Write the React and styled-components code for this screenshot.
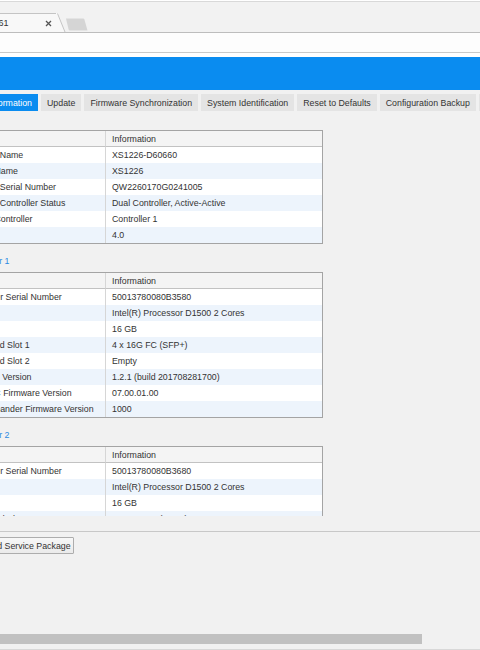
import styled, { createGlobalStyle } from 'styled-components';

const GlobalStyle = createGlobalStyle`
  html, body {
    margin: 0;
    padding: 0;
    background: #f1f1f1;
    overflow: hidden;
  }
  body {
    font-family: "Liberation Sans", Arial, sans-serif;
  }
`;

const TABS = [
  'Information',
  'Update',
  'Firmware Synchronization',
  'System Identification',
  'Reset to Defaults',
  'Configuration Backup',
  'Volume Restoration',
];

const SYSTEM_ROWS = [
  ['System Name', 'XS1226-D60660'],
  ['Model Name', 'XS1226'],
  ['System Serial Number', 'QW2260170G0241005'],
  ['Current Controller Status', 'Dual Controller, Active-Active'],
  ['Active Controller', 'Controller 1'],
  ['Version', '4.0'],
];

const controllerRows = (serial) => [
  ['Controller Serial Number', serial],
  ['CPU', 'Intel(R) Processor D1500 2 Cores'],
  ['Memory', '16 GB'],
  ['Host Card Slot 1', '4 x 16G FC (SFP+)'],
  ['Host Card Slot 2', 'Empty'],
  ['Software Version', '1.2.1 (build 201708281700)'],
  ['SAS IOC Firmware Version', '07.00.01.00'],
  ['SAS Expander Firmware Version', '1000'],
];

function InfoTable({ rows, inset = 3 }) {
  return (
    <Table>
      <HeadCell $inset={inset} />
      <HeadCell $value>Information</HeadCell>
      {rows.map(([label, value], i) => (
        <Row key={label} $striped={i % 2 === 1}>
          <Cell $inset={inset}>{label}</Cell>
          <Cell $value>{value}</Cell>
        </Row>
      ))}
    </Table>
  );
}

function App() {
  return (
    <Window>
      <GlobalStyle />
      <TabStrip>
        <BrowserTab>
          <TabTitle>XS1226-D60661</TabTitle>
          <svg width='7' height='7' viewBox='0 0 7 7'>
            <path d='M1 1 L6 6 M6 1 L1 6' stroke='#555' strokeWidth='1.3' />
          </svg>
        </BrowserTab>
        <TabEdge width='10' height='20' viewBox='0 0 10 20'>
          <path d='M0 0 L2 0 L9 19 L0 19 Z' fill='#f8f8f8' />
          <path d='M1.5 0.5 L9 19' stroke='#c4c4c4' strokeWidth='1' fill='none' />
        </TabEdge>
        <NewTab width='26' height='13' viewBox='0 0 26 13'>
          <path d='M3 0.5 L20 0.5 Q21 0.5 21.4 1.6 L24.5 12.5 L7 12.5 Q6 12.5 5.6 11.4 Z' fill='#d5d5d5' />
        </NewTab>
      </TabStrip>
      <Toolbar />
      <PageTop />
      <Banner />
      <Body>
        <TabList>
          {TABS.map((t, i) => (
            <Tab key={t} $active={i === 0}>{t}</Tab>
          ))}
        </TabList>
        <Panel>
          <InfoTable rows={SYSTEM_ROWS} />
          <SectionTitle>Controller 1</SectionTitle>
          <InfoTable rows={controllerRows('50013780080B3580')} inset={0} />
          <SectionTitle>Controller 2</SectionTitle>
          <InfoTable rows={controllerRows('50013780080B3680')} inset={0} />
        </Panel>
        <Footer>
          <Button type='button'>Download Service Package</Button>
        </Footer>
      </Body>
      <ScrollTrack>
        <ScrollThumb style={{ width: 422 }} />
      </ScrollTrack>
      <BottomEdge />
    </Window>
  );
}

const Window = styled.div`
  width: 480px;
  height: 650px;
  overflow: hidden;
  display: flex;
  flex-direction: column;
  background: #fff;
  padding-top: 1px;
  box-sizing: border-box;
`;

const TabStrip = styled.div`
  height: 32px;
  box-sizing: border-box;
  padding-top: 11px;
  background: #f2f2f2;
  border-top: 1px solid #d9d9d9;
  border-bottom: 1px solid #bdbdbd;
  display: flex;
  align-items: flex-start;
  margin-left: -66px;
  flex: none;
`;

const BrowserTab = styled.div`
  width: 123px;
  height: 19px;
  box-sizing: border-box;
  padding: 0 5px 0 8px;
  background: #f8f8f8;
  border-top: 1px solid #c4c4c4;
  display: flex;
  align-items: center;
  justify-content: space-between;
  font-size: 9px;
  color: #333;
`;

const TabTitle = styled.span`
  white-space: nowrap;
`;

const TabEdge = styled.svg`
  display: block;
  margin-left: -1px;
`;

const NewTab = styled.svg`
  display: block;
  margin: 5px 0 0 -3px;
`;

const Toolbar = styled.div`
  height: 19px;
  flex: none;
  background: #fdfdfd;
  border-bottom: 1px solid #c9c9c9;
`;

const PageTop = styled.div`
  height: 4px;
  flex: none;
  background: #fff;
`;

const Banner = styled.div`
  height: 33px;
  flex: none;
  background: #0a8cf0;
`;

const Body = styled.div`
  flex: 1;
  min-height: 0;
  margin-left: -40px;
  padding-top: 4px;
  background: #f1f1f1;
  font-size: 8.8px;
  color: #333;
`;

const TabList = styled.div`
  display: flex;
  gap: 3px;
  height: 17px;
  padding-left: 22px;
  white-space: nowrap;
  overflow: hidden;
`;

const Tab = styled.div`
  flex: none;
  display: flex;
  align-items: center;
  padding: 0 6px;
  background: ${(p) => (p.$active ? '#0a8cf0' : '#e4e4e4')};
  color: ${(p) => (p.$active ? '#fff' : '#333')};
`;

const Panel = styled.div`
  height: 405px;
  box-sizing: border-box;
  padding: 19px 0 0 4px;
  overflow: hidden;
`;

const Table = styled.div`
  width: 359px;
  box-sizing: border-box;
  border: 1px solid #a4a4a4;
  background: #fff;
  display: grid;
  grid-template-columns: 141px 1fr;
`;

const HeadCell = styled.div`
  height: 16px;
  box-sizing: border-box;
  display: flex;
  align-items: center;
  padding-left: ${(p) => (p.$value ? '6px' : `${p.$inset}px`)};
  background: #f4f4f4;
  border-bottom: 1px solid #c2c2c2;
  border-right: ${(p) => (p.$value ? 'none' : '1px solid #d6d6d6')};
`;

const Row = styled.div`
  display: contents;

  > div {
    background: ${(p) => (p.$striped ? '#edf4fc' : '#fff')};
  }
`;

const Cell = styled.div`
  height: 16px;
  box-sizing: border-box;
  display: flex;
  align-items: center;
  white-space: nowrap;
  overflow: hidden;
  padding-left: ${(p) => (p.$value ? '6px' : `${p.$inset}px`)};
  border-right: ${(p) => (p.$value ? 'none' : '1px solid #d6d6d6')};
`;

const SectionTitle = styled.div`
  padding: 10px 0 3px;
  line-height: 15px;
  color: #2b8ae2;
`;

const Footer = styled.div`
  margin-top: 15px;
  border-top: 1px solid #c8c8c8;
  padding: 5px 0 0 0;
`;

const Button = styled.button`
  height: 17px;
  margin-left: -2px;
  padding: 0 2px 0 4px;
  font-family: inherit;
  font-size: 8.8px;
  color: #333;
  background: linear-gradient(#f7f7f7, #ebebeb);
  border: 1px solid #adadad;
  border-radius: 1px;
`;

const ScrollTrack = styled.div`
  height: 10px;
  flex: none;
  background: #f1f1f1;
`;

const ScrollThumb = styled.div`
  height: 100%;
  background: #c1c1c1;
`;

const BottomEdge = styled.div`
  height: 6px;
  flex: none;
  box-sizing: border-box;
  background: #f1f1f1;
  border-top: 4px solid #f1f1f1;
  border-bottom: 1px solid #d8d8d8;
`;

export default App;
